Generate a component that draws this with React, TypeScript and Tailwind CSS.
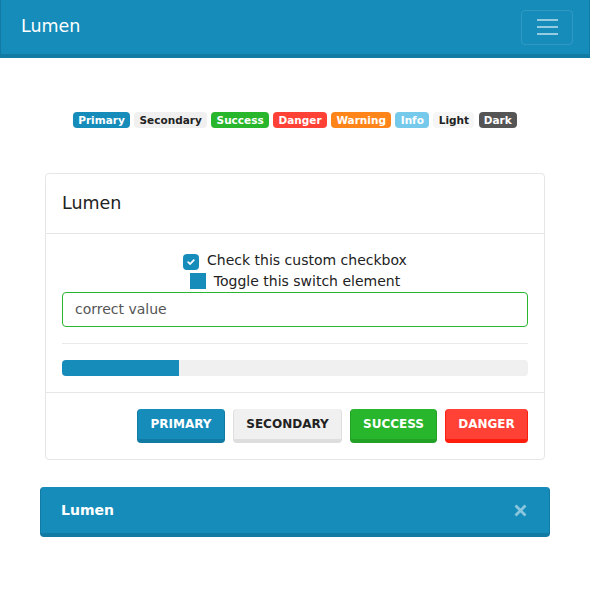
import React from "react";

const badges: { label: string; cls: string }[] = [
  { label: "Primary", cls: "bg-[#158CBA] text-white" },
  { label: "Secondary", cls: "bg-[#f0f0f0] text-[#222]" },
  { label: "Success", cls: "bg-[#28B62C] text-white" },
  { label: "Danger", cls: "bg-[#FF4136] text-white" },
  { label: "Warning", cls: "bg-[#FF851B] text-white" },
  { label: "Info", cls: "bg-[#75CAEB] text-white" },
  { label: "Light", cls: "bg-[#f6f6f6] text-[#222]" },
  { label: "Dark", cls: "bg-[#555555] text-white" },
];

const buttons: { label: string; cls: string }[] = [
  { label: "PRIMARY", cls: "w-[88px] bg-[#158CBA] border-[#127BA3] text-white" },
  { label: "SECONDARY", cls: "w-[109px] bg-[#f0f0f0] border-[#dedede] text-[#222]" },
  { label: "SUCCESS", cls: "w-[87px] bg-[#28B62C] border-[#23A127] text-white" },
  { label: "DANGER", cls: "w-[83px] bg-[#FF4136] border-[#FF1D0D] text-white" },
];

export default function App() {
  return (
    <div className="min-h-[600px] bg-white text-[14px] leading-[1.5] text-[#222] font-['DejaVu_Sans',sans-serif]">
      <nav className="h-[58px] bg-[#158CBA] border-x border-b-4 border-[#127BA3] flex items-center justify-between pl-[20px] pr-[16px]">
        <span className="text-[17.5px] text-white leading-none">Lumen</span>
        <button className="w-[52px] h-[35px] rounded-[4px] border border-[rgba(255,255,255,0.12)] flex flex-col items-center justify-center gap-[5px]">
          <span className="block w-[21px] h-[2px] bg-[rgba(255,255,255,0.55)]" />
          <span className="block w-[21px] h-[2px] bg-[rgba(255,255,255,0.55)]" />
          <span className="block w-[21px] h-[2px] bg-[rgba(255,255,255,0.55)]" />
        </button>
      </nav>

      <div className="mt-[54px] flex justify-center gap-[4.3px]">
        {badges.map((b) => (
          <span
            key={b.label}
            className={`inline-flex items-center h-[16px] px-[5.25px] rounded-[4px] text-[10.5px] font-bold leading-none ${b.cls}`}
          >
            {b.label}
          </span>
        ))}
      </div>

      <div className="mt-[45px] mx-[45px] border border-[#e6e6e6] rounded-[4px]">
        <div className="h-[60px] px-4 flex items-center border-b border-[#e6e6e6]">
          <span className="text-[17.5px] leading-none text-[#222]">Lumen</span>
        </div>
        <div className="p-4">
          <div className="flex justify-center h-[21px]">
            <span className="mt-[4px] w-[16px] h-[16px] rounded-[4px] bg-[#158CBA] flex items-center justify-center">
              <svg width="10" height="10" viewBox="0 0 10 10">
                <polyline points="2.2,5.2 4.2,7 7.8,3.2" fill="none" stroke="white" strokeWidth="1.8" strokeLinecap="round" strokeLinejoin="round" />
              </svg>
            </span>
            <span className="ml-[8px]">Check this custom checkbox</span>
          </div>
          <div className="flex justify-center h-[21px]">
            <span className="mt-[2px] w-[16px] h-[16px] bg-[#158CBA]" />
            <span className="ml-[8px]">Toggle this switch element</span>
          </div>
          <div className="h-[35px] border border-[#28B62C] rounded-[4px] px-3 flex items-center text-[#555]">
            correct value
          </div>
          <div className="my-4 border-t border-[#e9e9e9]" />
          <div className="h-[16px] rounded-[4px] bg-[#f0f0f0] overflow-hidden">
            <div className="h-full w-1/4 bg-[#158CBA]" />
          </div>
        </div>
        <div className="border-t border-[#e6e6e6] p-4 flex justify-end gap-2">
          {buttons.map((b) => (
            <button
              key={b.label}
              className={`h-[34px] px-0 border-x border-b-4 rounded-[4px] text-[12px] font-bold leading-[18px] text-center ${b.cls}`}
            >
              {b.label}
            </button>
          ))}
        </div>
      </div>

      <div className="relative mt-[27px] mx-[40px] h-[50px] bg-[#158CBA] border-x border-b-4 border-[#127BA3] rounded-[4px] pl-[20px] flex items-center text-white font-bold">
        Lumen
        <span className="absolute right-[22px] top-[17px]">
          <svg width="13" height="13" viewBox="0 0 13 13">
            <path d="M1.5 1.5 L11.5 11.5 M11.5 1.5 L1.5 11.5" stroke="rgba(255,255,255,0.5)" strokeWidth="2.8" />
          </svg>
        </span>
      </div>
    </div>
  );
}
